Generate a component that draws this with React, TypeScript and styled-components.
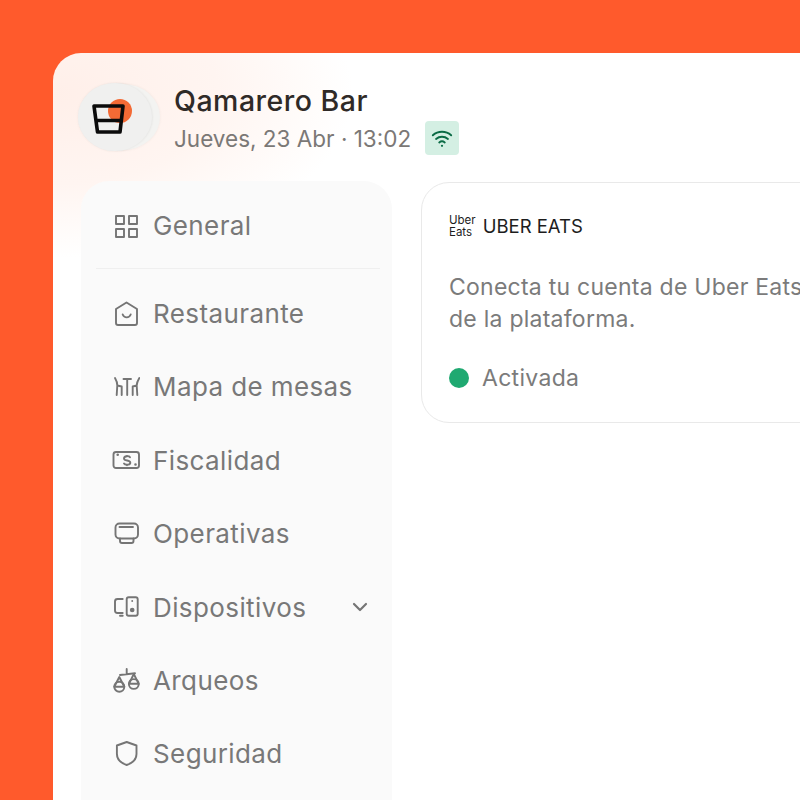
import styled, { createGlobalStyle } from 'styled-components';
import { ChevronDown } from 'lucide-react';
import type { ReactNode } from 'react';

const GlobalStyle = createGlobalStyle`
  html, body {
    margin: 0;
    height: 100%;
    overflow: hidden;
    background: #ff5a2c;
  }
  * {
    box-sizing: border-box;
  }
  #root {
    height: 100%;
  }
`;

const Page = styled.div`
  width: 800px;
  height: 800px;
  padding: 53px 0 0 53px;
  overflow: hidden;
  background: #ff5a2c;
  font-family: Inter, 'Noto Sans', sans-serif;
`;

const Panel = styled.div`
  width: 1000px;
  height: 1000px;
  padding: 28px;
  border-radius: 28px 0 0 0;
  background:
    radial-gradient(ellipse 300px 165px at 0 40px, #ffefe9 0%, #fff5f1 55%, #ffffff 100%),
    #fff;
`;

const Header = styled.header`
  display: flex;
  align-items: center;
  gap: 22px;
  height: 72px;
  margin-bottom: 28px;
`;

const Avatar = styled.div`
  position: relative;
  flex: none;
  width: 74px;
  height: 68px;
  margin-left: -3px;
  border-radius: 50%;
  background: #f0f0ef;
  display: flex;
  align-items: center;
  justify-content: center;
  box-shadow: 0 0 3px rgba(0, 0, 0, 0.05);

  &::before {
    content: '';
    position: absolute;
    z-index: 0;
    top: 1px;
    left: 8px;
    width: 74px;
    height: 66px;
    border-radius: 50%;
    background: #f3f3f1;
    box-shadow: 0 0 3px rgba(0, 0, 0, 0.06);
  }

  &::after {
    content: '';
    position: absolute;
    z-index: 0;
    inset: 0;
    border-radius: 50%;
    background: #f0f0ef;
    box-shadow: 1px 0 2px rgba(0, 0, 0, 0.05);
  }

  svg {
    position: relative;
    z-index: 1;
    margin: 4px 2px 0 0;
  }
`;

const HeaderText = styled.div`
  display: flex;
  flex-direction: column;
  gap: 3px;
  margin-top: 5px;
`;

const Title = styled.h1`
  margin: 0;
  font-size: 28.5px;
  line-height: 36px;
  font-weight: 500;
  letter-spacing: 0.5px;
  color: #2f2a27;
`;

const DateRow = styled.div`
  display: flex;
  align-items: center;
  gap: 14px;
  font-size: 22.5px;
  line-height: 34px;
  color: #7b7876;
`;

const WifiBadge = styled.span`
  width: 34px;
  height: 34px;
  margin-top: -2px;
  border-radius: 4px;
  background: #d4efe3;
  display: flex;
  align-items: center;
  justify-content: center;
`;

const Body = styled.div`
  display: flex;
  align-items: flex-start;
  gap: 29px;
`;

const Sidebar = styled.nav`
  flex: none;
  width: 311px;
  padding: 8px 12px 40px 15px;
  border-radius: 28px;
  background: #fafafa;
`;

const Divider = styled.hr`
  margin: 6px 0 7.5px;
  border: 0;
  border-top: 1px solid #efefef;
`;

const NavRow = styled.div`
  display: flex;
  align-items: center;
  height: 73.4px;
  padding-left: 16px;
  gap: 13px;
  font-size: 26px;
  letter-spacing: 0.4px;
  color: #787878;
`;

const NavIcon = styled.svg`
  flex: none;
  width: 28px;
  height: 28px;
  fill: none;
  stroke: #757575;
  stroke-width: 1.9;
  stroke-linecap: round;
  stroke-linejoin: round;
`;

const NavLabel = styled.span`
  flex: 1;
`;

const Chevron = styled(ChevronDown)`
  flex: none;
  margin-right: 8px;
  color: #757575;
`;

const Card = styled.section`
  flex: none;
  width: 560px;
  height: 241px;
  margin-top: 1px;
  padding: 28px 28px 28px 27px;
  border: 1px solid #e9e9e9;
  border-radius: 28px;
  background: #fff;
`;

const CardHead = styled.div`
  display: flex;
  align-items: center;
  gap: 7px;
  height: 30px;
`;

const UberLogo = styled.span`
  font-size: 11.5px;
  line-height: 12px;
  color: #1d1d1d;
`;

const CardTitle = styled.span`
  font-size: 18.5px;
  color: #1d1d1d;
`;

const Description = styled.p`
  margin: 30px 0 0;
  font-size: 23px;
  line-height: 32px;
  letter-spacing: 0.25px;
  color: #7b7b7b;
  white-space: nowrap;
`;

const StatusRow = styled.div`
  display: flex;
  align-items: center;
  gap: 13px;
  margin-top: 27px;
  font-size: 23px;
  line-height: 32px;
  letter-spacing: 0.3px;
  color: #7b7b7b;
`;

const StatusDot = styled.span`
  width: 20px;
  height: 20px;
  border-radius: 50%;
  background: #1fa971;
`;

const GlassLogo = () => (
  <svg width="48" height="48" viewBox="0 0 48 48" fill="none">
    <circle cx="30" cy="16" r="12" fill="#f36a35" />
    <path
      d="M4 11h29l-3 26H7.500z M5.500 25.500h26"
      stroke="#0b0b0b"
      strokeWidth="3.600"
      strokeLinejoin="round"
    />
  </svg>
);

const WifiIcon = () => (
  <svg width="22" height="22" viewBox="0 0 24 24" fill="none" stroke="#0b6b45" strokeWidth="2.100" strokeLinecap="round">
    <path d="M2 9c5.700-5 14.300-5 20 0" />
    <path d="M5.500 13c3.800-3.200 9.200-3.200 13 0" />
    <path d="M9 16.800c1.800-1.400 4.200-1.400 6 0" />
    <path d="M12 20.500h.01" strokeWidth="2.400" />
  </svg>
);

const icons: Record<string, ReactNode> = {
  grid: (
    <>
      <rect x="4" y="4" width="8" height="8" />
      <rect x="17" y="4" width="8" height="8" />
      <rect x="4" y="17" width="8" height="8" />
      <rect x="17" y="17" width="8" height="8" />
    </>
  ),
  home: (
    <>
      <path d="M14.500 2.500 25 9v14a2 2 0 0 1-2 2H6a2 2 0 0 1-2-2V9z" />
      <path d="M10.700 14.500c1.500 3.800 6.500 3.800 8 0" />
    </>
  ),
  table: (
    <>
      <path d="M3 5c1.500 2.500 2.300 5 2.300 7.500L4.700 22 M5.300 12.500l4.400 1V22" />
      <path d="M27.300 5c-1.500 2.500-2.600 5-2.600 7.500l.6 9.500 M24.700 12.500l-4 1V22" />
      <path d="M11.500 6h7.500 M15.200 6v16" />
    </>
  ),
  money: (
    <>
      <rect x="1.500" y="6" width="25.500" height="16" rx="2.500" />
      <path d="M18 11.200c-1-1.500-6-1.500-6 1.200 0 3 6.300 1.300 6.300 4.300 0 2.500-5.300 2.500-6.300.8" />
      <path d="M15 9.800v.6 M15 18.800v.6" strokeWidth="1.500" />
      <path d="M5.700 8.800h.01 M23.500 18.500h.01" strokeWidth="2.600" />
    </>
  ),
  monitor: (
    <>
      <rect x="3.500" y="3.500" width="22.500" height="15" rx="4" />
      <path d="M7.500 7h13.500" />
      <path d="M8 18.500v2.500a2 2 0 0 0 2 2h9.500a2 2 0 0 0 2-2v-2.500" />
    </>
  ),
  devices: (
    <>
      <path d="M10.700 6H5.500a2.500 2.500 0 0 0-2.500 2.500v9A2.500 2.500 0 0 0 5.500 20h5.200" />
      <path d="M8 22.700h2.700" />
      <rect x="14.700" y="4.300" width="11" height="18.400" rx="2" />
      <path d="M20.200 8h.01" />
      <circle cx="20.200" cy="17" r="1.400" fill="#757575" />
    </>
  ),
  scale: (
    <>
      <path d="M14.700 2v4.800 M8 8l15-1.700" />
      <circle cx="7.300" cy="19.700" r="5" />
      <path d="M2.300 19.700 7.300 10l5 9.700z" />
      <circle cx="21.800" cy="17" r="4.900" />
      <path d="M17 16.800 21.800 7l4.900 9.800z" />
    </>
  ),
  shield: (
    <path d="M14.700 2 24.500 5.500V14c0 5-4 9-9.800 11-5.800-2-9.800-6-9.800-11V5.500z" />
  ),
};

const NavItem = ({ icon, label, expandable }: { icon: string; label: string; expandable?: boolean }) => (
  <NavRow>
    <NavIcon viewBox="0 0 28 28">{icons[icon]}</NavIcon>
    <NavLabel>{label}</NavLabel>
    {expandable && <Chevron size={24} strokeWidth={2.2} />}
  </NavRow>
);

export default function App() {
  return (
    <Page>
      <GlobalStyle />
      <Panel>
        <Header>
          <Avatar>
            <GlassLogo />
          </Avatar>
          <HeaderText>
            <Title>Qamarero Bar</Title>
            <DateRow>
              <span>Jueves, 23 Abr · 13:02</span>
              <WifiBadge>
                <WifiIcon />
              </WifiBadge>
            </DateRow>
          </HeaderText>
        </Header>
        <Body>
          <Sidebar>
            <NavItem icon="grid" label="General" />
            <Divider />
            <NavItem icon="home" label="Restaurante" />
            <NavItem icon="table" label="Mapa de mesas" />
            <NavItem icon="money" label="Fiscalidad" />
            <NavItem icon="monitor" label="Operativas" />
            <NavItem icon="devices" label="Dispositivos" expandable />
            <NavItem icon="scale" label="Arqueos" />
            <NavItem icon="shield" label="Seguridad" />
          </Sidebar>
          <Card>
            <CardHead>
              <UberLogo>
                Uber
                <br />
                Eats
              </UberLogo>
              <CardTitle>UBER EATS</CardTitle>
            </CardHead>
            <Description>
              Conecta tu cuenta de Uber Eats para recibir pedidos
              <br />
              de la plataforma.
            </Description>
            <StatusRow>
              <StatusDot />
              Activada
            </StatusRow>
          </Card>
        </Body>
      </Panel>
    </Page>
  );
}
